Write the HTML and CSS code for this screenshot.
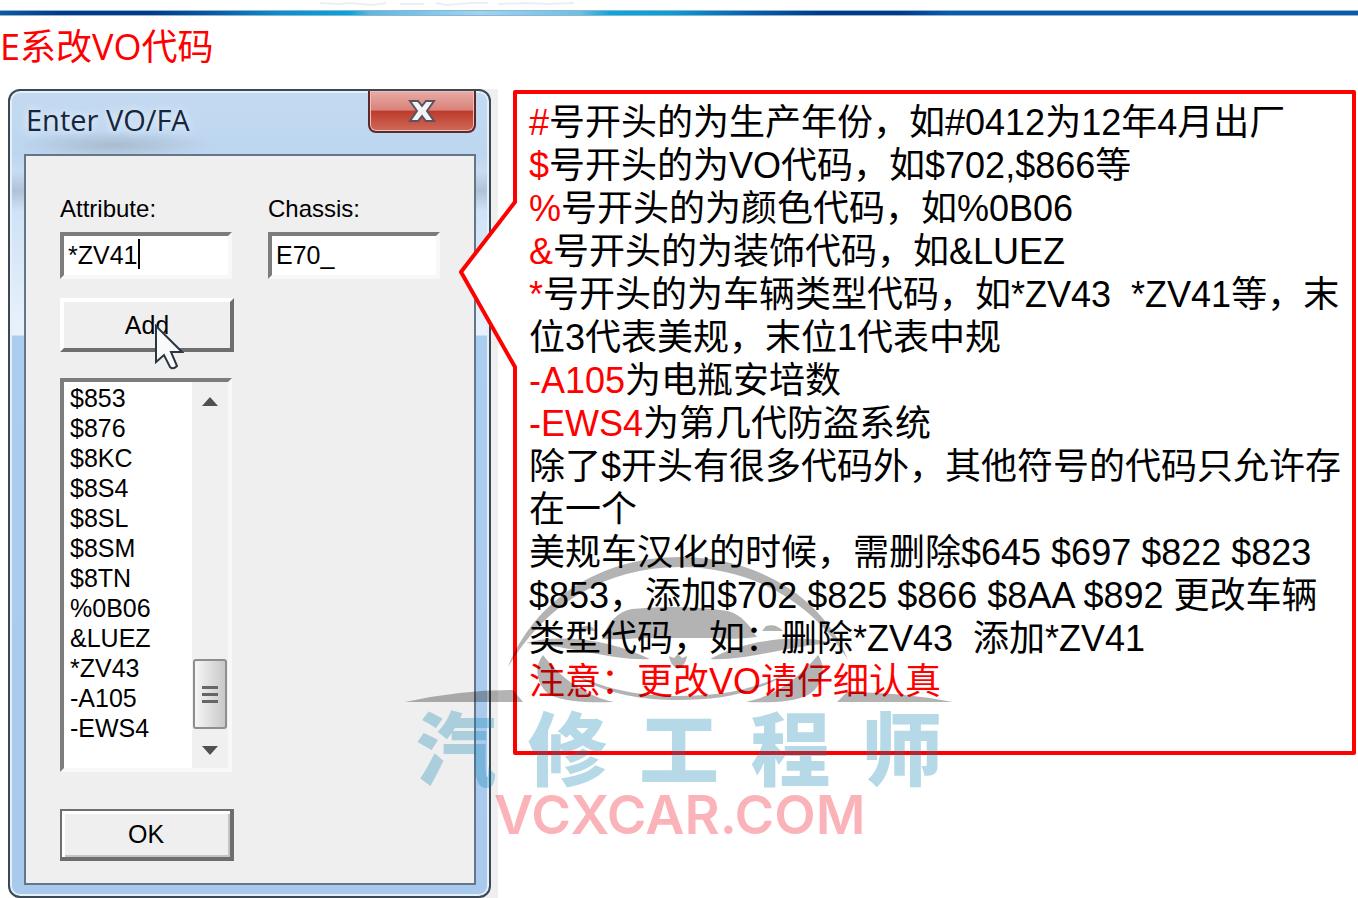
FILE: index.html
```
<!DOCTYPE html>
<html lang="zh-CN">
<head>
    <meta charset="UTF-8">
    <meta name="viewport" content="width=device-width, initial-scale=1.0">
    <title>E系改VO代码</title>
    <link rel="stylesheet" href="styles.css">
</head>
<body>

<header>
    <svg class="header-trace" width="270" height="4" viewBox="0 0 270 4" aria-hidden="true">
        <path d="M0 0L18 1L30 0L52 2L66 0M80 1L104 1M116 0L126 2L150 0L168 0M178 1L206 0L228 1L254 0" />
    </svg>
    <div class="rule"></div>
    <h1>E系改VO代码</h1>
</header>

<main>
    <div class="shot">
        <form class="window" onsubmit="return false">
            <div class="titlebar">
                <h2>Enter VO/FA</h2>
                <button type="button" class="close" aria-label="Close">
                    <svg width="28" height="24" viewBox="0 0 28 24">
                        <path d="M2 2H10L14 7L18 2H26L19 12L26 22H18L14 17L10 22H2L9 12Z" />
                    </svg>
                </button>
            </div>

            <div class="client">
                <div class="fields">
                    <div class="field">
                        <label for="attribute">Attribute:</label>
                        <input type="text" id="attribute" value="*ZV41">
                        <span class="caret"></span>
                    </div>
                    <div class="field">
                        <label for="chassis">Chassis:</label>
                        <input type="text" id="chassis" value="E70_">
                    </div>
                </div>

                <button type="button" class="btn add">Add
                    <svg class="cursor" width="30" height="48" viewBox="0 0 30 48" aria-hidden="true">
                        <path d="M2 2V38L10 31L16 43Q19 46 23 42L17 28H28Z" />
                    </svg>
                </button>

                <div class="listbox">
                    <select size="12" aria-label="Codes">
                        <option>$853</option>
                        <option>$876</option>
                        <option>$8KC</option>
                        <option>$8S4</option>
                        <option>$8SL</option>
                        <option>$8SM</option>
                        <option>$8TN</option>
                        <option>%0B06</option>
                        <option>&amp;LUEZ</option>
                        <option>*ZV43</option>
                        <option>-A105</option>
                        <option>-EWS4</option>
                    </select>
                    <div class="scrollbar">
                        <svg width="18" height="10" viewBox="0 0 18 10"><path d="M1 10L9 1L17 10Z" /></svg>
                        <div class="thumb"><i></i><i></i><i></i></div>
                        <svg width="18" height="10" viewBox="0 0 18 10"><path d="M1 0L9 9L17 0Z" /></svg>
                    </div>
                </div>

                <button type="submit" class="btn ok">OK</button>
            </div>
        </form>
    </div>

    <section class="callout">
        <svg class="pointer" width="60" height="172" viewBox="0 0 60 172" aria-hidden="true">
            <polygon points="60,3 57,3 3,73 57,168 60,168" class="fill" />
            <polyline points="57,3 3,73 57,168" class="line" />
        </svg>
        <p><b>#</b>号开头的为生产年份，如#0412为12年4月出厂</p>
        <p><b>$</b>号开头的为VO代码，如$702,$866等</p>
        <p><b>%</b>号开头的为颜色代码，如%0B06</p>
        <p><b>&amp;</b>号开头的为装饰代码，如&amp;LUEZ</p>
        <p><b>*</b>号开头的为车辆类型代码，如*ZV43&nbsp; *ZV41等，末位3代表美规，末位1代表中规</p>
        <p><b>-A105</b>为电瓶安培数</p>
        <p><b>-EWS4</b>为第几代防盗系统</p>
        <p>除了$开头有很多代码外，其他符号的代码只允许存在一个</p>
        <p>美规车汉化的时候，需删除$645 $697 $822 $823 $853，添加$702 $825 $866 $8AA $892 更改车辆类型代码，如：删除*ZV43&nbsp; 添加*ZV41</p>
        <p><b>注意：更改VO请仔细认真</b></p>
    </section>
</main>

<div class="watermark">
    <svg width="550" height="150" viewBox="404 555 550 150" aria-hidden="true">
        <path d="M508 667C535 600 600 557 680 557C760 557 825 600 848 660C815 605 755 567 680 567C605 567 545 605 508 667Z" />
        <path d="M602 639C608 622 618 611 632 609Q680 604 728 611C742 615 750 626 757 637Q735 640 720 638H640Q620 640 602 639Z" />
        <path d="M578 631Q582 624 592 627L596 631ZM783 631Q776 623 766 626L762 631Z" />
        <path d="M526 643C560 633 612 640 650 659C615 661 575 647 526 643ZM832 643C798 633 746 640 710 659C745 661 783 647 832 643Z" />
        <path d="M543 655C556 672 580 695 614 702C590 703 566 702 550 695C537 686 533 668 543 655ZM818 655C804 672 780 695 746 702C770 703 794 702 808 695C823 686 827 668 818 655Z" />
        <path d="M570 672C610 692 645 696 679 696C715 696 750 692 790 672C752 696 716 700 679 700C645 700 606 696 570 672Z" />
        <path d="M678 654L682 658L687 656Q686 665 678 669Q670 665 669 656L674 658Z" />
        <path d="M405 702Q460 690 513 690L523 702ZM953 702Q900 692 847 692L837 702Z" />
    </svg>
    <div class="mark-cn"><span>汽</span><span>修</span><span>工</span><span>程</span><span>师</span></div>
    <div class="mark-en">VCXCAR.COM</div>
</div>

</body>
</html>
```
FILE: styles.css
```
* {
    box-sizing: border-box;
}

body {
    position: relative;
    margin: 0;
    background: #fff;
    color: #000;
    font-family: "Liberation Sans", "Noto Sans CJK SC", sans-serif;
}

header {
    height: 89px;
}

.header-trace {
    display: block;
    height: 10px;
    margin-left: 320px;
    fill: none;
    stroke: #eceef2;
    stroke-width: 2;
}

.rule {
    height: 6px;
    border-top: 1px solid #8fb4d6;
    border-bottom: 1px solid #8fb4d6;
    background: linear-gradient(90deg, #0f5a9f 0, #033a85 60px, #033a85 150px, #0a58a0 210px, #0a90c8 280px, #08a5d8 350px, #5db8de 370px, #9fd5f0 480px, #6cc0e0 580px, #0aa8d8 610px, #0aa0d0 670px, #0a60a8 750px, #033a85 820px, #033a85 900px, #0a5cab 950px);
}

header h1 {
    margin: 8px 0 0;
    color: #f00;
    font: 400 36px/46px "Open Sans", "Noto Sans CJK SC", sans-serif;
}

main {
    display: flex;
    align-items: flex-start;
    padding: 0 2px 0 5px;
}

.shot {
    flex: none;
    width: 493px;
    padding: 0 7px 0 3px;
    background: linear-gradient(90deg, #fff 10px, #efefef 10px);
}

/* Window frame */
.window {
    padding: 0 13px 11px 14px;
    border: 2px solid #3c4854;
    border-radius: 12px;
    background: linear-gradient(#c3daf1 0, #bdd6f0 64px, #c8dcf2 80px, #afc2d6 100px, #cfe2f6 120px, #e9f2fb 244px, #abcdf0 245px, #a9caec 100%);
    box-shadow: inset 0 0 0 2px #e4effa;
}

.titlebar {
    display: flex;
    justify-content: space-between;
    align-items: flex-start;
    height: 63px;
    background: radial-gradient(ellipse 100px 14px at 90px 54px, #a9bccf, transparent);
}

.titlebar h2 {
    margin: 9px 0 0 2px;
    color: #16263c;
    font: 400 29px/40px "Open Sans", sans-serif;
    text-shadow: 0 0 10px #fff;
}

.close {
    display: flex;
    justify-content: center;
    align-items: center;
    width: 108px;
    height: 42px;
    padding: 0;
    border: 2px solid #5c2a2c;
    border-top: 0;
    border-radius: 0 0 8px 8px;
    background: linear-gradient(#e8aca6 0, #d98279 48%, #bd3a2c 50%, #cf6a58 100%);
    box-shadow: inset 0 0 0 1px #f0c0b8;
}

.close path {
    fill: #f4f4f4;
    stroke: #5a5460;
    stroke-width: 2;
}

.client {
    display: flex;
    flex-direction: column;
    align-items: flex-start;
    padding: 38px 34px 22px;
    border: 2px solid #65758a;
    background: #efefef;
    font-size: 25px;
}

.fields {
    display: flex;
    gap: 36px;
}

.field {
    position: relative;
    width: 172px;
}

.field label {
    display: block;
    margin-bottom: 8px;
    font-size: 24px;
    line-height: 30px;
}

.field input {
    display: block;
    width: 100%;
    height: 47px;
    padding: 0 4px;
    border: 4px solid;
    border-color: #7c7c7c #f8f8f8 #f8f8f8 #7c7c7c;
    background: #fff;
    color: #000;
    font: inherit;
}

.caret {
    position: absolute;
    left: 78px;
    top: 45px;
    width: 2px;
    height: 30px;
    background: #000;
}

.btn {
    position: relative;
    width: 174px;
    padding: 0;
    border: 4px solid;
    border-color: #fff #6e6e6e #6e6e6e #fff;
    background: #efefef;
    color: #000;
    font: inherit;
}

.add {
    height: 54px;
    margin: 19px 0 26px;
}

.cursor {
    position: absolute;
    left: 90px;
    top: 22px;
    z-index: 1;
}

.cursor path {
    fill: #fafafa;
    stroke: #2c3640;
    stroke-width: 2;
}

.ok {
    height: 52px;
    margin-top: 37px;
    border-width: 2px 4px 4px 2px;
    border-color: #6e6e6e;
    box-shadow: inset 3px 3px 0 #fff, inset -2px -2px 0 #c4c4c4;
}

.listbox {
    display: flex;
    width: 172px;
    height: 394px;
    border: 4px solid;
    border-color: #7c7c7c #f8f8f8 #f8f8f8 #7c7c7c;
    background: #fff;
}

.listbox select {
    flex: 1;
    min-width: 0;
    height: 100%;
    padding: 2px 0 0;
    border: 0;
    outline: 0;
    background: #fff;
    color: #000;
    font: inherit;
    overflow: hidden;
}

.listbox option {
    height: 30px;
    padding: 0 6px;
    line-height: 30px;
}

.scrollbar {
    display: flex;
    flex-direction: column;
    align-items: center;
    width: 36px;
    padding: 14px 0 12px;
    background: #f0f0f0;
}

.scrollbar path {
    fill: #505050;
}

.thumb {
    display: flex;
    flex-direction: column;
    justify-content: center;
    align-items: center;
    gap: 4px;
    width: 34px;
    height: 70px;
    margin: auto 0 17px;
    border: 2px solid #8e8e8e;
    border-radius: 3px;
    background: linear-gradient(90deg, #f6f6f6, #c8c8c8);
}

.thumb i {
    width: 16px;
    height: 3px;
    background: #666;
}

/* Notes */
.callout {
    position: relative;
    flex: 1;
    min-width: 0;
    margin: 1px 0 0 15px;
    padding: 7px 8px 48px 12px;
    border: 4px solid #f00;
    border-radius: 2px;
    background: #fff;
    font-size: 36px;
    line-height: 43px;
}

.callout p {
    margin: 0;
}

.callout b {
    color: #f00;
    font-weight: 400;
}

.pointer {
    position: absolute;
    left: -59px;
    top: 105px;
}

.pointer .fill {
    fill: #fff;
}

.pointer .line {
    fill: none;
    stroke: #f00;
    stroke-width: 4;
    stroke-linejoin: round;
    stroke-linecap: round;
}

/* Watermark */
.watermark {
    position: absolute;
    left: 404px;
    top: 555px;
    width: 550px;
    pointer-events: none;
}

.watermark svg {
    display: block;
    fill: rgba(8, 4, 6, 0.3);
}

.mark-cn {
    display: flex;
    justify-content: space-between;
    padding: 0 12px;
    color: rgba(10, 130, 177, 0.3);
    font: 900 80px/78px "Noto Sans CJK SC", sans-serif;
}

.mark-en {
    padding-left: 90px;
    color: rgba(238, 7, 22, 0.3);
    font: 600 54px/64px Inter, sans-serif;
}
```
